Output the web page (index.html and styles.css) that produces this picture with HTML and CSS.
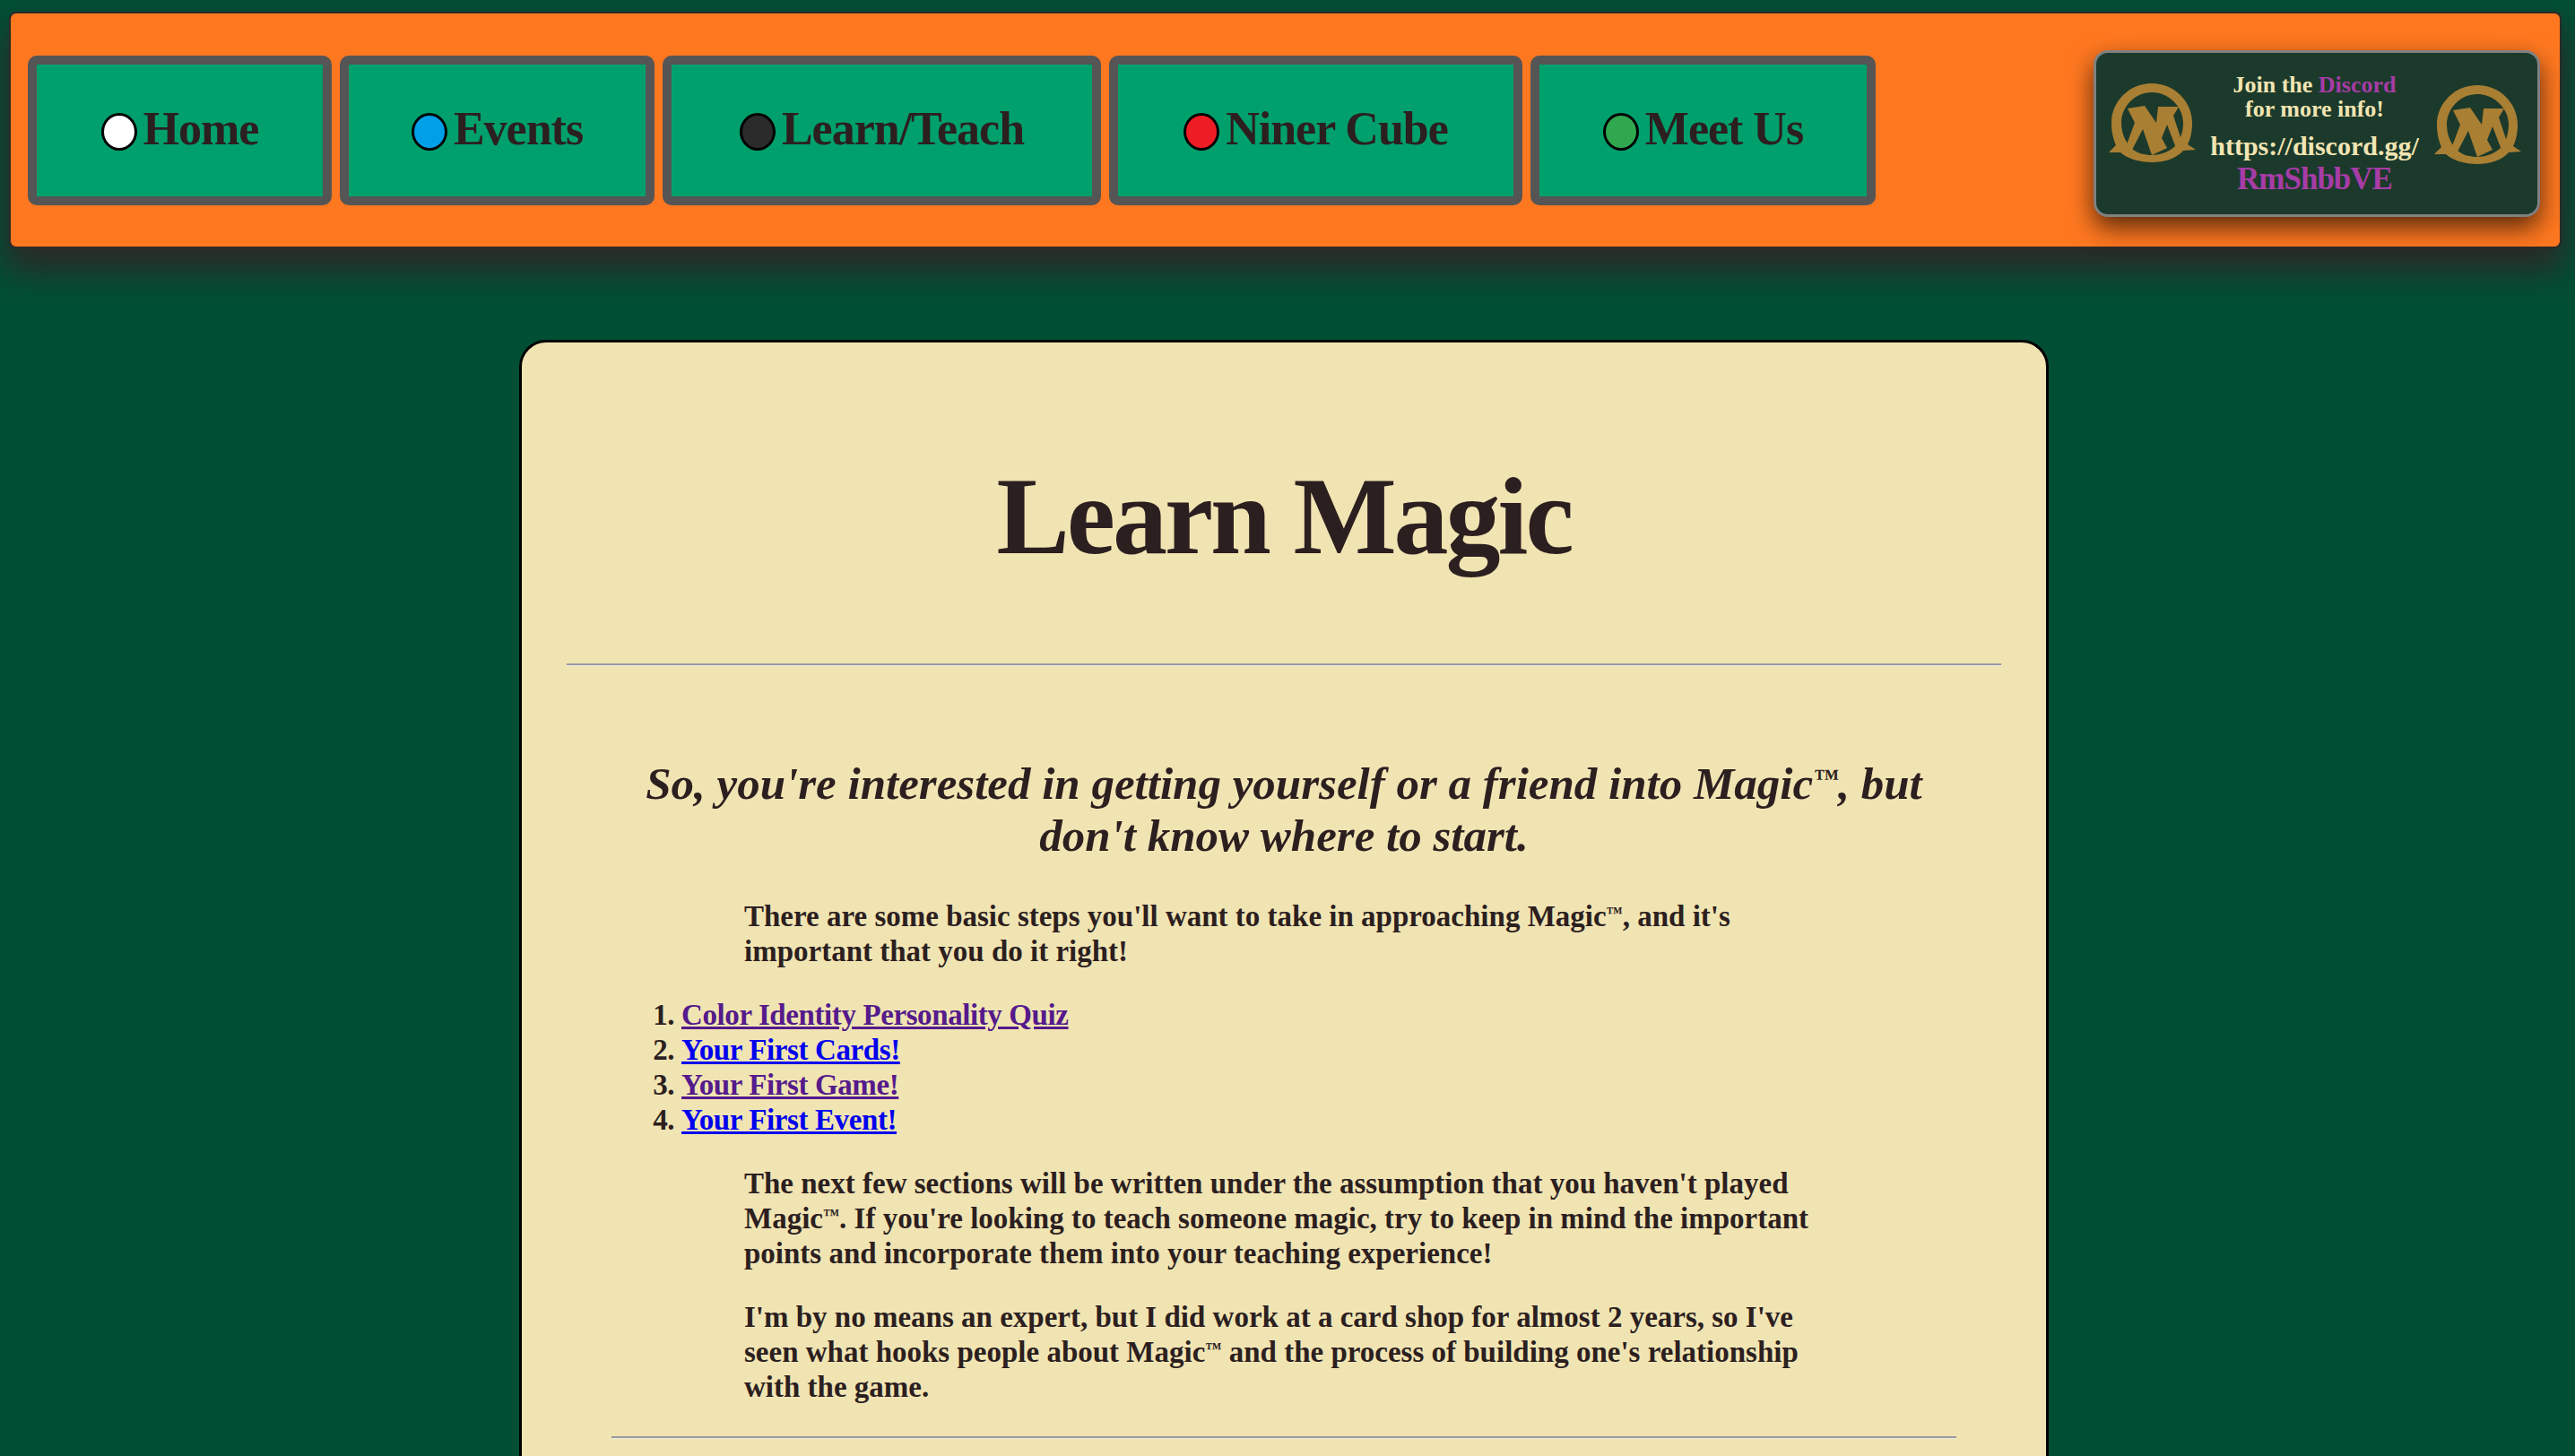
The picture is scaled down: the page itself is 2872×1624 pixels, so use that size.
FILE: index.html
```html
<!DOCTYPE html>
<html lang="en">
<head>
    <meta charset="UTF-8">
    <meta name="viewport" content="width=device-width, initial-scale=1.0">
    <title>Learn Magic</title>
    <link rel="stylesheet" href="styles.css">
</head>
<body>
    <svg class="defs" width="0" height="0">
        <symbol id="logo" viewBox="0 0 110 110">
            <path fill-rule="evenodd" d="M55 6C80 6 100 26 100 50C100 60 98 68 95 74L104 80L90 81C82 90 69 94 55 94C41 94 28 90 20 83L7 83L15 75C12 68 10 60 10 50C10 26 30 6 55 6ZM55 16C36 16 21 32 21 50C21 61 25 71 33 79C39 84 47 86 55 86C65 86 76 82 83 74C87 68 90 60 90 50C90 32 74 16 55 16Z"/>
            <path d="M28 34L47 31L60 50L62 32L85 32L79 42L90 75L82 78L72 52L66 67L72 78L55 86L45 57L33 80L27 74L36 50Z"/>
        </symbol>
    </svg>

    <header class="topbar">
        <nav class="nav">
            <a class="nav-btn" href="#"><span class="dot dot-white"></span>Home</a>
            <a class="nav-btn" href="#"><span class="dot dot-blue"></span>Events</a>
            <a class="nav-btn" href="#"><span class="dot dot-black"></span>Learn/Teach</a>
            <a class="nav-btn" href="#"><span class="dot dot-red"></span>Niner Cube</a>
            <a class="nav-btn" href="#"><span class="dot dot-green"></span>Meet Us</a>
        </nav>
        <div class="discord">
            <svg class="logo"><use href="#logo"/></svg>
            <div class="discord-text">
                <p class="discord-join">Join the <span class="purple">Discord</span><br>for more info!</p>
                <p class="discord-url">https://discord.gg/</p>
                <p class="discord-code">RmShbbVE</p>
            </div>
            <svg class="logo logo-right"><use href="#logo"/></svg>
        </div>
    </header>

    <main class="card">
        <h1 class="title">Learn Magic</h1>
        <hr class="rule">
        <h2 class="subtitle">So, you're interested in getting yourself or a friend into Magic<span class="tm">™</span>, but<br>don't know where to start.</h2>
        <p class="para">There are some basic steps you'll want to take in approaching Magic<span class="tm">™</span>, and it's<br>important that you do it right!</p>
        <ol class="steps">
            <li><a class="visited" href="#">Color Identity Personality Quiz</a></li>
            <li><a href="#">Your First Cards!</a></li>
            <li><a class="visited" href="#">Your First Game!</a></li>
            <li><a href="#">Your First Event!</a></li>
        </ol>
        <p class="para">The next few sections will be written under the assumption that you haven't played<br>Magic<span class="tm">™</span>. If you're looking to teach someone magic, try to keep in mind the important<br>points and incorporate them into your teaching experience!</p>
        <p class="para">I'm by no means an expert, but I did work at a card shop for almost 2 years, so I've<br>seen what hooks people about Magic<span class="tm">™</span> and the process of building one's relationship<br>with the game.</p>
        <hr class="rule rule-short">
    </main>
</body>
</html>
```

FILE: styles.css
```css
html, body {
    height: 1624px;
    overflow: hidden;
}

body {
    margin: 0;
    background-color: #004f35;
    color: #2c1f1f;
    font-family: "Liberation Serif", serif;
    font-weight: bold;
}

.defs {
    position: absolute;
}

.topbar {
    display: flex;
    justify-content: space-between;
    align-items: center;
    height: 260px;
    margin: 13px 15px 0 10px;
    padding: 0 20px 0 19px;
    background-color: #ff7820;
    border: 2px solid #2b2a28;
    border-radius: 8px;
    box-shadow: 0 22px 36px 4px #2b2a28;
}

.nav {
    display: grid;
    grid-template-columns: 339px 351px 489px 461px 385px;
    gap: 9px;
}

.nav-btn {
    display: flex;
    justify-content: center;
    align-items: center;
    gap: 7px;
    box-sizing: border-box;
    height: 167px;
    padding-bottom: 4px;
    background-color: #00a06d;
    border: 10px solid #555;
    border-radius: 10px;
    color: #2c1f1f;
    font-size: 52px;
    letter-spacing: -1px;
    text-decoration: none;
}

.dot {
    box-sizing: border-box;
    width: 40px;
    height: 42px;
    margin-top: 8px;
    border: 3px solid #000;
    border-radius: 50%;
}

.dot-white { background-color: #fff; }
.dot-blue { background-color: #00a0e9; }
.dot-black { background-color: #2b2b2b; }
.dot-red { background-color: #ee1c25; }
.dot-green { background-color: #2fa84f; }

.discord {
    display: flex;
    justify-content: space-between;
    align-items: center;
    box-sizing: border-box;
    width: 498px;
    height: 186px;
    margin: 8px 2px 0 0;
    padding: 0 20px 0 15px;
    background-color: #1c3a2b;
    border: 3px solid #808080;
    border-radius: 16px;
    box-shadow: 0 12px 28px rgba(0, 0, 0, 0.65);
    color: #f2e5b3;
    text-align: center;
}

.logo {
    width: 110px;
    height: 110px;
    margin: -14px -8px 0;
    fill: #a97f34;
}

.logo-right {
    margin-top: -10px;
}

.discord-text p {
    margin: 0;
}

.purple {
    color: #a63ca6;
}

.discord-join {
    font-size: 26px;
    line-height: 27px;
}

.discord-url {
    font-size: 30px;
    line-height: 37px;
    margin-top: 9px !important;
}

.discord-code {
    color: #a63ca6;
    font-size: 35px;
    letter-spacing: -1px;
    line-height: 37px;
}

.card {
    box-sizing: border-box;
    height: 1500px;
    margin: 102px 587px 0 579px;
    padding: 123px 50px 0;
    background-color: #f1e4b3;
    border: 3px solid #000;
    border-radius: 30px;
}

.title {
    margin: 0;
    font-size: 122px;
    line-height: 142px;
    letter-spacing: -3px;
    text-align: center;
}

.rule {
    height: 0;
    margin: 93px 0 0;
    border: none;
    border-top: 2px solid #9a9a9a;
    border-bottom: 1px solid #eee;
}

.rule-short {
    margin: 35px 50px 0;
}

.subtitle {
    margin: 102px 0 0;
    font-size: 51px;
    font-style: italic;
    line-height: 58px;
    text-align: center;
}

.tm {
    font-size: 0.55em;
    vertical-align: 0.5em;
    line-height: 0;
}

.para {
    margin: 32px 0 0 198px;
    font-size: 33px;
    line-height: 39px;
}

.subtitle + .para {
    margin-top: 42px;
}

.steps {
    margin: 32px 0 0;
    padding-left: 128px;
    font-size: 33px;
    line-height: 39px;
    letter-spacing: -0.4px;
}

a {
    color: #0000ee;
}

a.visited {
    color: #551a8b;
}
```
